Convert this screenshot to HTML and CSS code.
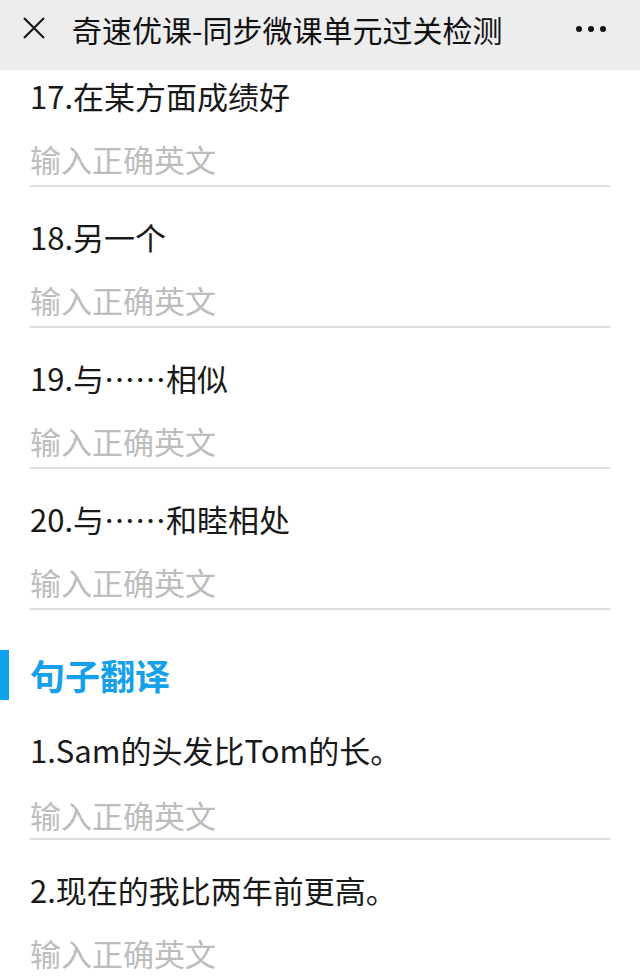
FILE: index.html
```html
<!DOCTYPE html>
<html lang="zh-CN">
<head>
    <meta charset="UTF-8">
    <meta name="viewport" content="width=device-width, initial-scale=1.0">
    <title>奇速优课-同步微课单元过关检测</title>
    <link rel="stylesheet" href="styles.css">
</head>
<body>
    <header class="topbar">
        <svg class="close-icon" width="22" height="22" viewBox="0 0 22 22">
            <path d="M1 1 L21 21 M21 1 L1 21" stroke="#1a1a1a" stroke-width="2.2" fill="none"/>
        </svg>
        <div class="topbar-title">奇速优课-同步微课单元过关检测</div>
        <div class="more">
            <span></span><span></span><span></span>
        </div>
    </header>

    <main class="content">
        <div class="item">
            <div class="question">17.在某方面成绩好</div>
            <input class="answer" type="text" placeholder="输入正确英文">
        </div>
        <div class="item">
            <div class="question">18.另一个</div>
            <input class="answer" type="text" placeholder="输入正确英文">
        </div>
        <div class="item">
            <div class="question">19.与……相似</div>
            <input class="answer" type="text" placeholder="输入正确英文">
        </div>
        <div class="item">
            <div class="question">20.与……和睦相处</div>
            <input class="answer" type="text" placeholder="输入正确英文">
        </div>

        <h2 class="section-title">句子翻译</h2>

        <div class="item">
            <div class="question">1.Sam的头发比Tom的长。</div>
            <input class="answer" type="text" placeholder="输入正确英文">
        </div>
        <div class="item">
            <div class="question">2.现在的我比两年前更高。</div>
            <input class="answer" type="text" placeholder="输入正确英文">
        </div>
    </main>
</body>
</html>
```
FILE: styles.css
```css
body {
    margin: 0;
    background: #fff;
    color: #1a1a1a;
    font-family: "Noto Sans CJK SC", "Noto Sans", sans-serif;
    overflow: hidden;
}

.topbar {
    height: 70px;
    background: #ededed;
    display: flex;
    align-items: center;
    padding: 0 22px 0 23px;
}

.close-icon {
    flex: none;
    margin-top: -14px;
}

.topbar-title {
    flex: 1;
    margin-left: 27px;
    margin-top: -12px;
    font-size: 30px;
    color: #111;
    white-space: nowrap;
}

.more {
    display: flex;
    gap: 6px;
    margin-top: -12px;
    margin-right: 12px;
}

.more span {
    width: 6px;
    height: 6px;
    border-radius: 50%;
    background: #111;
}

.content {
    padding: 6px 30px 0;
}

.item {
    margin-bottom: 30px;
}

.question {
    font-size: 31px;
    line-height: 40px;
    color: #1a1a1a;
}

.answer {
    display: block;
    box-sizing: content-box;
    width: 100%;
    height: 44px;
    margin-top: 20px;
    padding: 0 0 5px;
    border: none;
    border-bottom: 2px solid #dedede;
    outline: none;
    background: transparent;
    font-family: inherit;
    font-size: 31px;
    color: #333;
}

.answer::placeholder {
    color: #bdbdbd;
}

.section-title {
    margin: 40px 0 30px -30px;
    padding-left: 21px;
    border-left: 9px solid #0fa0ee;
    height: 50px;
    line-height: 50px;
    font-size: 35px;
    font-weight: bold;
    color: #14a0ea;
}

.section-title + .item .answer {
    margin-top: 22px;
    padding-bottom: 2px;
}
```
